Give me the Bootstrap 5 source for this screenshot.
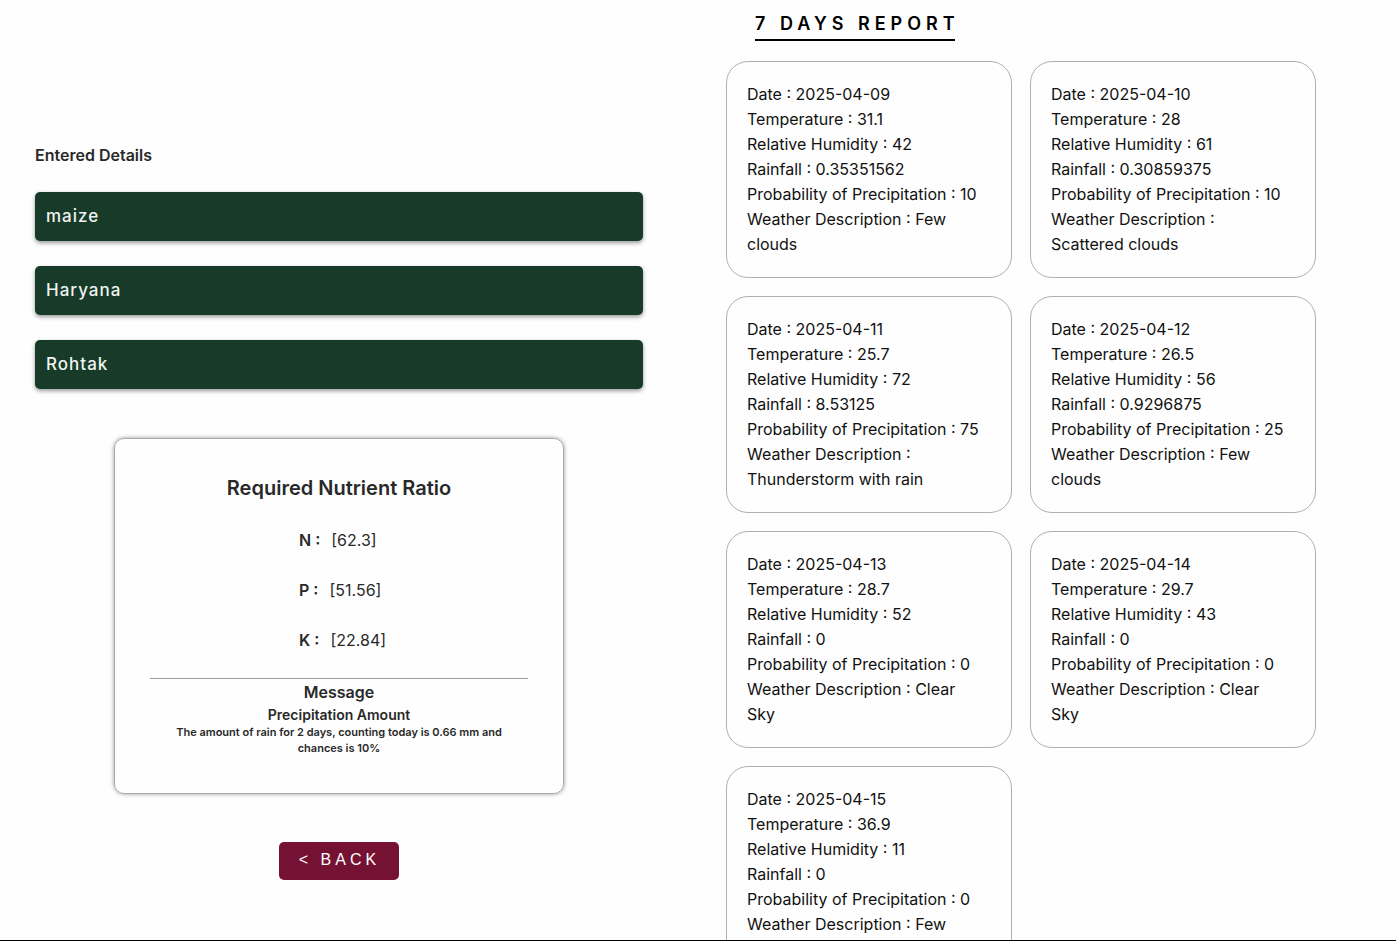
<!DOCTYPE html>
<html lang="en">
<head>
<meta charset="utf-8">
<meta name="viewport" content="width=device-width, initial-scale=1">
<title>7 Days Report</title>
<link href="https://cdn.jsdelivr.net/npm/bootstrap@5.3.0/dist/css/bootstrap.min.css" rel="stylesheet">
<style>
body{font-family:Inter,"Open Sans",sans-serif;font-size:16px;line-height:25px;color:#111;background:#fefefe}
.shell{height:100vh;overflow:hidden;border-bottom:1px solid #000}
.entered{padding:143px 55px 0 35px;color:#292929}
.entered-title{font-size:16px;line-height:25px;font-weight:600;margin-bottom:24px}
.field-list{gap:25px;margin-bottom:49px}
.field-value{background:#173b28;color:#f0f3f1;border-radius:5px;padding:12px 11px;font-size:17px;font-weight:500;letter-spacing:1px;box-shadow:0 2px 4px rgba(0,0,0,.4)}
.nutrient-box{width:100%;max-width:450px;border:1px solid #aaa;border-radius:10px;padding:37px 35px;margin-bottom:48px;text-align:center;box-shadow:0 0 4px rgba(0,0,0,.4)}
.nutrient-box h2{font-size:20px;line-height:25px;font-weight:600;margin-bottom:27px}
.nutrients{width:80px;margin:0 auto 25px 149px;gap:25px;text-align:left;white-space:nowrap}
.nutrients div{gap:11px}
.nutrients dt{font-weight:600}
.nutrient-box hr{margin:0 0 1px;border-color:#999;opacity:1}
.nutrient-box h3{font-size:16px;line-height:25px;font-weight:600;margin:0}
.nutrient-box h4{font-size:14px;line-height:19px;font-weight:600;margin:0}
.nutrient-box p{font-size:11px;line-height:16px;font-weight:600;margin:0 10px}
.btn-back,.btn-back:hover{background:#751233;color:#fff;border:0;border-radius:5px;font-family:"Liberation Sans",Arial,sans-serif;font-size:16px;line-height:22px;letter-spacing:4px;padding:7px 19px 9px 20px}
.report{padding:10px 80px 18px 28px;height:100%;overflow-y:auto;scrollbar-width:none}
.report::-webkit-scrollbar{display:none}
.report-title{margin:0 0 20px 29px;font-size:18px;line-height:27px;font-weight:600;letter-spacing:5px;color:#000;border-bottom:2px solid #000;padding-bottom:2px;width:200px;white-space:nowrap}
.days{display:grid;grid-template-columns:1fr 1fr;gap:18px}
.day{border:1px solid #b0b0b0;border-radius:22px;padding:20px 30px 20px 20px}
</style>
</head>
<body>
<main class="shell">
<div class="row g-0 h-100">
<section class="col-6 entered">
<h1 class="entered-title">Entered Details</h1>
<div class="field-list d-flex flex-column">
<div class="field-value">maize</div>
<div class="field-value">Haryana</div>
<div class="field-value">Rohtak</div>
</div>
<div class="d-flex flex-column align-items-center">
<div class="nutrient-box">
<h2>Required Nutrient Ratio</h2>
<dl class="nutrients d-flex flex-column">
<div class="d-flex"><dt>N :</dt><dd class="m-0">[62.3]</dd></div>
<div class="d-flex"><dt>P :</dt><dd class="m-0">[51.56]</dd></div>
<div class="d-flex"><dt>K :</dt><dd class="m-0">[22.84]</dd></div>
</dl>
<hr>
<h3>Message</h3>
<h4>Precipitation Amount</h4>
<p>The amount of rain for 2 days, counting today is 0.66 mm and chances is 10%</p>
</div>
<button type="button" class="btn btn-back">&lt; BACK</button>
</div>
</section>
<section class="col-6 report">
<h2 class="report-title">7 DAYS REPORT</h2>
<div class="days">
<article class="day"><div>Date : 2025-04-09</div><div>Temperature : 31.1</div><div>Relative Humidity : 42</div><div>Rainfall : 0.35351562</div><div>Probability of Precipitation : 10</div><div>Weather Description : Few clouds</div></article>
<article class="day"><div>Date : 2025-04-10</div><div>Temperature : 28</div><div>Relative Humidity : 61</div><div>Rainfall : 0.30859375</div><div>Probability of Precipitation : 10</div><div>Weather Description : Scattered&nbsp;clouds</div></article>
<article class="day"><div>Date : 2025-04-11</div><div>Temperature : 25.7</div><div>Relative Humidity : 72</div><div>Rainfall : 8.53125</div><div>Probability of Precipitation : 75</div><div>Weather Description : Thunderstorm with rain</div></article>
<article class="day"><div>Date : 2025-04-12</div><div>Temperature : 26.5</div><div>Relative Humidity : 56</div><div>Rainfall : 0.9296875</div><div>Probability of Precipitation : 25</div><div>Weather Description : Few clouds</div></article>
<article class="day"><div>Date : 2025-04-13</div><div>Temperature : 28.7</div><div>Relative Humidity : 52</div><div>Rainfall : 0</div><div>Probability of Precipitation : 0</div><div>Weather Description : Clear Sky</div></article>
<article class="day"><div>Date : 2025-04-14</div><div>Temperature : 29.7</div><div>Relative Humidity : 43</div><div>Rainfall : 0</div><div>Probability of Precipitation : 0</div><div>Weather Description : Clear Sky</div></article>
<article class="day"><div>Date : 2025-04-15</div><div>Temperature : 36.9</div><div>Relative Humidity : 11</div><div>Rainfall : 0</div><div>Probability of Precipitation : 0</div><div>Weather Description : Few clouds</div></article>
</div>
</section>
</div>
</main>
<script src="https://cdn.jsdelivr.net/npm/bootstrap@5.3.0/dist/js/bootstrap.bundle.min.js"></script>
</body>
</html>
